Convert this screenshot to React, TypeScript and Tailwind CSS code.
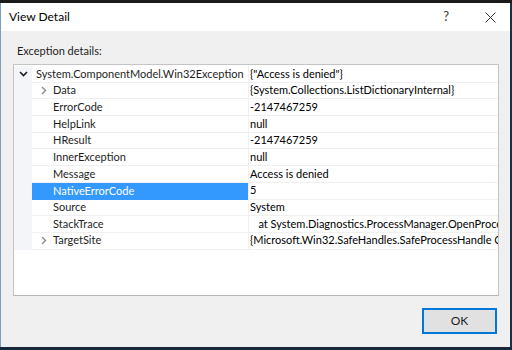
import { ReactNode } from "react";

type Row = {
  name: string;
  value: string;
  expander?: "open" | "closed";
  depth: number;
  selected?: boolean;
};

const rows: Row[] = [
  { name: "System.ComponentModel.Win32Exception", value: '{"Access is denied"}', expander: "open", depth: 0 },
  { name: "Data", value: "{System.Collections.ListDictionaryInternal}", expander: "closed", depth: 1 },
  { name: "ErrorCode", value: "-2147467259", depth: 1 },
  { name: "HelpLink", value: "null", depth: 1 },
  { name: "HResult", value: "-2147467259", depth: 1 },
  { name: "InnerException", value: "null", depth: 1 },
  { name: "Message", value: "Access is denied", depth: 1 },
  { name: "NativeErrorCode", value: "5", depth: 1, selected: true },
  { name: "Source", value: "System", depth: 1 },
  { name: "StackTrace", value: "   at System.Diagnostics.ProcessManager.OpenProcess(Int32 processId, Int32 access, Boolean throwIfExited)", depth: 1 },
  { name: "TargetSite", value: "{Microsoft.Win32.SafeHandles.SafeProcessHandle OpenProcess(Int32, Int32, Boolean)}", expander: "closed", depth: 1 },
];

function ChevronDown() {
  return (
    <svg width="9" height="6" viewBox="0 0 9 6" className="block">
      <path d="M1 1 L4.5 4.5 L8 1" fill="none" stroke="#1e1e1e" strokeWidth="1.6" />
    </svg>
  );
}

function ChevronRight() {
  return (
    <svg width="6" height="9" viewBox="0 0 6 9" className="block">
      <path d="M1 1 L4.5 4.5 L1 8" fill="none" stroke="#8a8a8a" strokeWidth="1.4" />
    </svg>
  );
}

function TreeRow({ row }: { row: Row }) {
  let lead: ReactNode = null;
  if (row.depth === 0 && row.expander === "open") lead = <ChevronDown />;

  return (
    <div className="flex h-[16.7px] items-stretch">
      <div className="flex w-[18px] shrink-0 items-center justify-center bg-[#f3f5f8]">{lead}</div>
      <div
        className={
          row.selected
            ? "flex w-[216px] shrink-0 items-center overflow-hidden bg-[#3399ff] text-white"
            : "flex w-[216px] shrink-0 items-center overflow-hidden border-b border-[#f0f0f0] text-[#1e1e1e]"
        }
      >
        {row.depth === 1 && (
          <span className="flex w-[21px] shrink-0 items-center justify-center pl-[2px]">
            {row.expander === "closed" && <ChevronRight />}
          </span>
        )}
        <span className={row.depth === 0 ? "whitespace-nowrap pl-[4px]" : "whitespace-nowrap"}>{row.name}</span>
      </div>
      <div className="flex min-w-0 flex-1 items-center overflow-hidden border-b border-l border-[#f0f0f0] pl-[1px] text-black">
        <span className="whitespace-pre">{row.value}</span>
      </div>
    </div>
  );
}

export default function App() {
  return (
    <div
      className="flex h-[350px] w-[512px] flex-col overflow-hidden bg-[#18283a] text-[11px]"
      style={{ fontFamily: 'Lato, "Open Sans", sans-serif' }}
    >
      <div className="h-[3px] shrink-0 bg-[#1a1a1a]" />
      <div className="flex h-[344px] shrink-0">
        <div className="flex w-[510px] shrink-0 flex-col border-l border-[#7d9dbd] bg-[#f0f0f0]">
          {/* title bar */}
          <div className="flex h-[28px] shrink-0 items-center bg-white pl-[8px] pr-[14px]">
            <span className="flex-1 text-[12px] text-black">View Detail</span>
            <span className="mr-[36px] text-[13px] text-[#333]">?</span>
            <svg width="11" height="11" viewBox="0 0 11 11">
              <path d="M0.5 0.5 L10.5 10.5 M10.5 0.5 L0.5 10.5" stroke="#333" strokeWidth="1" />
            </svg>
          </div>

          <div className="flex flex-1 flex-col px-[12px] pt-[12px]">
            <div className="h-[16px] pl-[4px] leading-[16px] text-[#1e1e1e]">Exception details:</div>
            <div className="mt-[5px] h-[232px] w-[486px] border border-[#c4c4c4] border-b-[#b5b5b5] bg-white pt-[1px]">
              {rows.map((r) => (
                <TreeRow key={r.name} row={r} />
              ))}
            </div>
            <div className="mt-[12px] flex justify-end pr-[1px]">
              <button className="h-[26px] w-[75px] border-2 border-[#0078d7] bg-[#e1e1e1] text-[12px] text-[#1e1e1e]">
                OK
              </button>
            </div>
          </div>
        </div>
        <div className="flex-1 bg-[#1c3242]" />
      </div>
      <div className="flex-1 bg-[#17283a]" />
    </div>
  );
}
